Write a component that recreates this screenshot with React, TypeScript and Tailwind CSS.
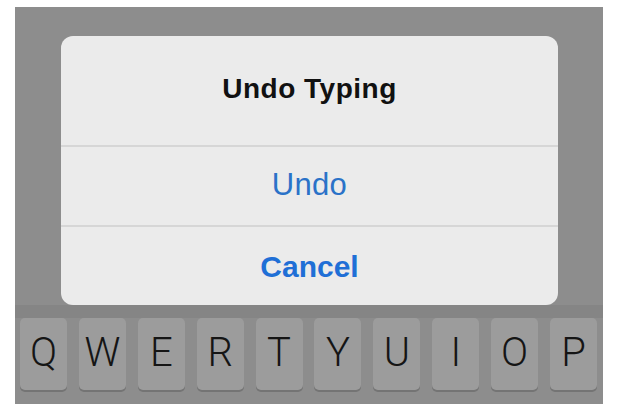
const keys = ['Q', 'W', 'E', 'R', 'T', 'Y', 'U', 'I', 'O', 'P'];

export default function App() {
    return (
        <div className="h-[412px] w-[620px] bg-white pt-[7px] pl-[15px] font-['Liberation_Sans',Arial,sans-serif]">
            <div className="flex h-[397px] w-[588px] flex-col bg-[#8d8d8d]">
                <div className="mt-[29px] ml-[46px] flex h-[269px] w-[497px] flex-col overflow-hidden rounded-[12px] bg-[#ebebeb]">
                    <div className="flex h-[109px] items-center justify-center pb-[4px] text-[28px] font-bold tracking-[0.5px] text-[#111]">
                        Undo Typing
                    </div>
                    <div className="h-[2px] bg-[#d6d6d6]" />
                    <div className="flex h-[78px] items-center justify-center pb-[2px] text-[31px] tracking-[0.3px] text-[#2a72c8]">
                        Undo
                    </div>
                    <div className="h-[2px] bg-[#d6d6d6]" />
                    <div className="flex h-[78px] items-center justify-center text-[30px] font-bold text-[#1f6fd6]">
                        Cancel
                    </div>
                </div>

                <div className="h-[13px] bg-[#858585]" />

                <div className="flex gap-[11.9px] pl-[5px]">
                    {keys.map((key) => (
                        <div
                            key={key}
                            className="flex h-[72px] w-[47px] items-center justify-center rounded-[5px] bg-[#9c9c9c] pb-[2px] font-['Roboto',sans-serif] text-[40px] leading-none font-light text-[#151515] shadow-[0_2px_0_#747474]"
                        >
                            {key}
                        </div>
                    ))}
                </div>
            </div>
        </div>
    );
}
